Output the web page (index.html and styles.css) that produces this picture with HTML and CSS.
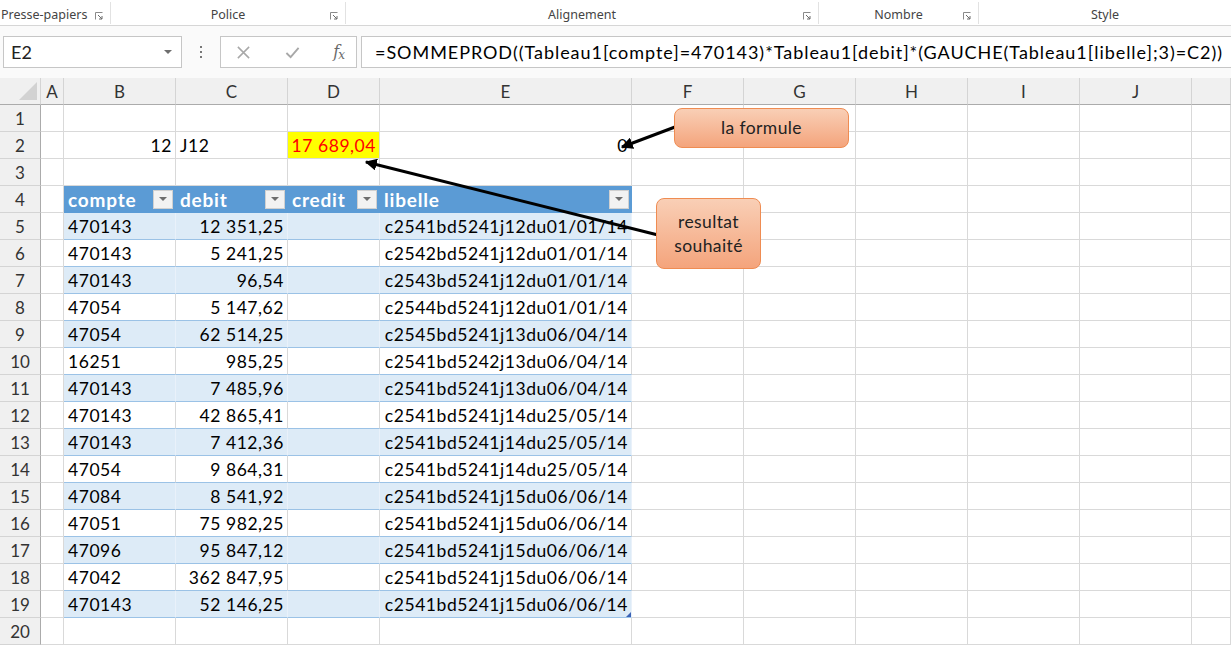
FILE: index.html
```html
<!DOCTYPE html>
<html lang="fr">
<head>
<meta charset="utf-8">
<title>Excel - SOMMEPROD</title>
<link rel="stylesheet" href="styles.css">
</head>
<body>
<div class="ribbon">
  <div class="grp grp-first"><span class="glabel">Presse-papiers</span><svg class="launch" viewBox="0 0 8 8"><path d="M0.5 0.5h7M0.5 0.5v7" stroke="#8a8a8a" fill="none"/><path d="M3 3l4 4M7 4v3h-3" stroke="#6a6a6a" fill="none"/></svg></div>
  <div class="grp"><span class="glabel">Police</span><svg class="launch" viewBox="0 0 8 8"><path d="M0.5 0.5h7M0.5 0.5v7" stroke="#8a8a8a" fill="none"/><path d="M3 3l4 4M7 4v3h-3" stroke="#6a6a6a" fill="none"/></svg></div>
  <div class="grp"><span class="glabel">Alignement</span><svg class="launch" viewBox="0 0 8 8"><path d="M0.5 0.5h7M0.5 0.5v7" stroke="#8a8a8a" fill="none"/><path d="M3 3l4 4M7 4v3h-3" stroke="#6a6a6a" fill="none"/></svg></div>
  <div class="grp"><span class="glabel">Nombre</span><svg class="launch" viewBox="0 0 8 8"><path d="M0.5 0.5h7M0.5 0.5v7" stroke="#8a8a8a" fill="none"/><path d="M3 3l4 4M7 4v3h-3" stroke="#6a6a6a" fill="none"/></svg></div>
  <div class="grp grp-last"><span class="glabel">Style</span></div>
</div>

<div class="fbar">
  <div class="namebox"><span>E2</span><svg class="nb-arrow" viewBox="0 0 8 4"><path d="M0 0h8l-4 4z" fill="#6e6e6e"/></svg></div>
  <div class="vdots"><i></i><i></i><i></i></div>
  <div class="fbtns">
    <svg class="fbtn" viewBox="0 0 16 16"><path d="M2 2l12 12M14 2L2 14" stroke="#a8a8a8" stroke-width="1.6" fill="none"/></svg>
    <svg class="fbtn" viewBox="0 0 16 16"><path d="M1.5 8.5l4.5 4.5 8.5-10" stroke="#a8a8a8" stroke-width="2" fill="none"/></svg>
    <span class="fx">f<sub>x</sub></span>
  </div>
  <div class="formula">=SOMMEPROD((Tableau1[compte]=470143)*Tableau1[debit]*(GAUCHE(Tableau1[libelle];3)=C2))</div>
</div>

<div class="sheet">
  <div class="row colhdr">
    <div class="corner"><svg class="corner-tri" viewBox="0 0 18 18"><path d="M18 0V18H0z" fill="#d2d2d2"/></svg></div>
    <div class="ch">A</div><div class="ch">B</div><div class="ch">C</div><div class="ch">D</div><div class="ch">E</div><div class="ch">F</div><div class="ch">G</div><div class="ch">H</div><div class="ch">I</div><div class="ch">J</div><div class="ch"></div>
  </div>

  <div class="row"><div class="rh">1</div><div class="c"></div><div class="c"></div><div class="c"></div><div class="c"></div><div class="c"></div><div class="c"></div><div class="c"></div><div class="c"></div><div class="c"></div><div class="c"></div><div class="c"></div></div>

  <div class="row"><div class="rh">2</div><div class="c"></div><div class="c r">12</div><div class="c">J12</div><div class="c r hl">17 689,04</div><div class="c r zero">0</div><div class="c"></div><div class="c"></div><div class="c"></div><div class="c"></div><div class="c"></div><div class="c"></div></div>

  <div class="row"><div class="rh">3</div><div class="c"></div><div class="c"></div><div class="c"></div><div class="c"></div><div class="c"></div><div class="c"></div><div class="c"></div><div class="c"></div><div class="c"></div><div class="c"></div><div class="c"></div></div>

  <div class="row"><div class="rh">4</div><div class="c"></div>
    <div class="c th">compte<span class="dd"><svg viewBox="0 0 8 4"><path d="M0 0h8l-4 4z" fill="#6d6d6d"/></svg></span></div>
    <div class="c th">debit<span class="dd"><svg viewBox="0 0 8 4"><path d="M0 0h8l-4 4z" fill="#6d6d6d"/></svg></span></div>
    <div class="c th">credit<span class="dd"><svg viewBox="0 0 8 4"><path d="M0 0h8l-4 4z" fill="#6d6d6d"/></svg></span></div>
    <div class="c th">libelle<span class="dd"><svg viewBox="0 0 8 4"><path d="M0 0h8l-4 4z" fill="#6d6d6d"/></svg></span></div>
    <div class="c"></div><div class="c"></div><div class="c"></div><div class="c"></div><div class="c"></div><div class="c"></div></div>

  <div class="row band"><div class="rh">5</div><div class="c"></div><div class="c td">470143</div><div class="c td r">12 351,25</div><div class="c td"></div><div class="c td r">c2541bd5241j12du01/01/14</div><div class="c"></div><div class="c"></div><div class="c"></div><div class="c"></div><div class="c"></div><div class="c"></div></div>
  <div class="row"><div class="rh">6</div><div class="c"></div><div class="c td">470143</div><div class="c td r">5 241,25</div><div class="c td"></div><div class="c td r">c2542bd5241j12du01/01/14</div><div class="c"></div><div class="c"></div><div class="c"></div><div class="c"></div><div class="c"></div><div class="c"></div></div>
  <div class="row band"><div class="rh">7</div><div class="c"></div><div class="c td">470143</div><div class="c td r">96,54</div><div class="c td"></div><div class="c td r">c2543bd5241j12du01/01/14</div><div class="c"></div><div class="c"></div><div class="c"></div><div class="c"></div><div class="c"></div><div class="c"></div></div>
  <div class="row"><div class="rh">8</div><div class="c"></div><div class="c td">47054</div><div class="c td r">5 147,62</div><div class="c td"></div><div class="c td r">c2544bd5241j12du01/01/14</div><div class="c"></div><div class="c"></div><div class="c"></div><div class="c"></div><div class="c"></div><div class="c"></div></div>
  <div class="row band"><div class="rh">9</div><div class="c"></div><div class="c td">47054</div><div class="c td r">62 514,25</div><div class="c td"></div><div class="c td r">c2545bd5241j13du06/04/14</div><div class="c"></div><div class="c"></div><div class="c"></div><div class="c"></div><div class="c"></div><div class="c"></div></div>
  <div class="row"><div class="rh">10</div><div class="c"></div><div class="c td">16251</div><div class="c td r">985,25</div><div class="c td"></div><div class="c td r">c2541bd5242j13du06/04/14</div><div class="c"></div><div class="c"></div><div class="c"></div><div class="c"></div><div class="c"></div><div class="c"></div></div>
  <div class="row band"><div class="rh">11</div><div class="c"></div><div class="c td">470143</div><div class="c td r">7 485,96</div><div class="c td"></div><div class="c td r">c2541bd5241j13du06/04/14</div><div class="c"></div><div class="c"></div><div class="c"></div><div class="c"></div><div class="c"></div><div class="c"></div></div>
  <div class="row"><div class="rh">12</div><div class="c"></div><div class="c td">470143</div><div class="c td r">42 865,41</div><div class="c td"></div><div class="c td r">c2541bd5241j14du25/05/14</div><div class="c"></div><div class="c"></div><div class="c"></div><div class="c"></div><div class="c"></div><div class="c"></div></div>
  <div class="row band"><div class="rh">13</div><div class="c"></div><div class="c td">470143</div><div class="c td r">7 412,36</div><div class="c td"></div><div class="c td r">c2541bd5241j14du25/05/14</div><div class="c"></div><div class="c"></div><div class="c"></div><div class="c"></div><div class="c"></div><div class="c"></div></div>
  <div class="row"><div class="rh">14</div><div class="c"></div><div class="c td">47054</div><div class="c td r">9 864,31</div><div class="c td"></div><div class="c td r">c2541bd5241j14du25/05/14</div><div class="c"></div><div class="c"></div><div class="c"></div><div class="c"></div><div class="c"></div><div class="c"></div></div>
  <div class="row band"><div class="rh">15</div><div class="c"></div><div class="c td">47084</div><div class="c td r">8 541,92</div><div class="c td"></div><div class="c td r">c2541bd5241j15du06/06/14</div><div class="c"></div><div class="c"></div><div class="c"></div><div class="c"></div><div class="c"></div><div class="c"></div></div>
  <div class="row"><div class="rh">16</div><div class="c"></div><div class="c td">47051</div><div class="c td r">75 982,25</div><div class="c td"></div><div class="c td r">c2541bd5241j15du06/06/14</div><div class="c"></div><div class="c"></div><div class="c"></div><div class="c"></div><div class="c"></div><div class="c"></div></div>
  <div class="row band"><div class="rh">17</div><div class="c"></div><div class="c td">47096</div><div class="c td r">95 847,12</div><div class="c td"></div><div class="c td r">c2541bd5241j15du06/06/14</div><div class="c"></div><div class="c"></div><div class="c"></div><div class="c"></div><div class="c"></div><div class="c"></div></div>
  <div class="row"><div class="rh">18</div><div class="c"></div><div class="c td">47042</div><div class="c td r">362 847,95</div><div class="c td"></div><div class="c td r">c2541bd5241j15du06/06/14</div><div class="c"></div><div class="c"></div><div class="c"></div><div class="c"></div><div class="c"></div><div class="c"></div></div>
  <div class="row band"><div class="rh">19</div><div class="c"></div><div class="c td">470143</div><div class="c td r">52 146,25</div><div class="c td"></div><div class="c td r last">c2541bd5241j15du06/06/14</div><div class="c"></div><div class="c"></div><div class="c"></div><div class="c"></div><div class="c"></div><div class="c"></div></div>
  <div class="row"><div class="rh">20</div><div class="c"></div><div class="c"></div><div class="c"></div><div class="c"></div><div class="c"></div><div class="c"></div><div class="c"></div><div class="c"></div><div class="c"></div><div class="c"></div><div class="c"></div></div>

  <svg class="arrows" viewBox="0 0 1231 569" width="1231" height="569">
    <defs>
      <marker id="ah" viewBox="0 0 10 10" refX="9" refY="5" markerWidth="4" markerHeight="4" orient="auto-start-reverse">
        <path d="M0 0L10 5L0 10z" fill="#000"/>
      </marker>
    </defs>
    <line x1="675" y1="49" x2="622" y2="69" stroke="#000" stroke-width="3" marker-end="url(#ah)"/>
    <line x1="658" y1="157" x2="366" y2="84" stroke="#000" stroke-width="3" marker-end="url(#ah)"/>
  </svg>
  <div class="callout co-formule">la formule</div>
  <div class="callout co-result">resultat<br>souhaité</div>
</div>
</body>
</html>
```
FILE: styles.css
```css
* { box-sizing: border-box; }
html, body { margin: 0; padding: 0; }
body {
  width: 1231px;
  height: 647px;
  overflow: hidden;
  background: #ffffff;
  font-family: Lato, "Open Sans", "Liberation Sans", sans-serif;
  color: #000;
}

/* ribbon group labels */
.ribbon {
  height: 26px;
  display: grid;
  grid-template-columns: 111px 235px 473px 160px 1fr;
  border-bottom: 1px solid #d6d6d6;
  background: #ffffff;
}
.grp {
  position: relative;
  display: flex;
  align-items: center;
  justify-content: center;
  border-right: 1px solid #e2e2e2;
  height: 22px;
  margin-top: 2px;
  padding-top: 2px;
}
.grp-first { justify-content: flex-start; }
.grp-last { border-right: none; }
.glabel {
  font-family: "Noto Sans", "Open Sans", sans-serif;
  font-size: 12.5px;
  color: #444;
}
.grp-first .glabel { margin-left: 1px; }
.launch {
  position: absolute;
  right: 7px;
  top: 10px;
  width: 8px;
  height: 8px;
}

/* formula bar */
.fbar {
  height: 52px;
  display: flex;
  align-items: center;
  padding: 0 0 0 3px;
  background: #fafafa;
}
.namebox {
  width: 179px;
  height: 32px;
  background: #fff;
  border: 1px solid #c6c6c6;
  display: flex;
  align-items: center;
  justify-content: space-between;
  padding: 0 9px 0 7px;
  font-size: 18px;
  color: #222;
}
.nb-arrow { width: 8px; height: 4px; }
.vdots {
  width: 38px;
  display: flex;
  flex-direction: column;
  align-items: center;
  gap: 3px;
}
.vdots i {
  display: block;
  width: 2px;
  height: 2px;
  background: #777;
}
.fbtns {
  width: 137px;
  height: 32px;
  background: #fff;
  border: 1px solid #c6c6c6;
  display: flex;
  align-items: center;
  justify-content: space-between;
  padding: 0 12px 0 15px;
}
.fbtn { width: 15px; height: 15px; }
.fx {
  font-family: "DejaVu Serif", "Liberation Serif", serif;
  font-style: italic;
  font-size: 16px;
  color: #6a6a6a;
  letter-spacing: -1px;
}
.fx sub { font-size: 12px; vertical-align: -2px; }
.formula {
  flex: 1;
  height: 32px;
  margin-left: 4px;
  background: #fff;
  border: 1px solid #c6c6c6;
  border-right: none;
  display: flex;
  align-items: center;
  padding-left: 13px;
  font-size: 18px;
  letter-spacing: 0.95px;
  white-space: nowrap;
  overflow: hidden;
}

/* sheet */
.sheet { position: relative; }
.row {
  display: grid;
  grid-template-columns: 41px 23px 112px 112px 92px 252px 112px 112px 112px 112px 112px 39px;
  height: 27px;
}
.c {
  border-right: 1px solid #d9d9d9;
  border-bottom: 1px solid #d9d9d9;
  display: flex;
  align-items: flex-end;
  padding: 0 3px 2px 4px;
  font-size: 17.5px;
  letter-spacing: 0.55px;
  white-space: nowrap;
  overflow: hidden;
  position: relative;
}
.r { justify-content: flex-end; }
.colhdr { height: 27px; }
.corner {
  background: #f0f0f0;
  border-right: 1px solid #d4d4d4;
  border-bottom: 1px solid #ababab;
  position: relative;
}
.corner-tri {
  position: absolute;
  right: 3px;
  bottom: 4px;
  width: 18px;
  height: 18px;
}
.ch {
  background: #f0f0f0;
  border-right: 1px solid #d4d4d4;
  border-bottom: 1px solid #ababab;
  display: flex;
  align-items: center;
  justify-content: center;
  font-size: 17px;
  color: #333;
}
.rh {
  background: #f0f0f0;
  border-right: 1px solid #ababab;
  border-bottom: 1px solid #d4d4d4;
  display: flex;
  align-items: center;
  justify-content: center;
  font-size: 17px;
  color: #333;
}

.hl {
  background: #ffff00;
  color: #ff0000;
}

/* table */
.th {
  background: #5b9bd5;
  color: #ffffff;
  font-weight: bold;
  font-size: 19px;
  letter-spacing: 0.8px;
  border-right-color: #5b9bd5;
  border-bottom-color: #5b9bd5;
  justify-content: space-between;
  align-items: center;
  padding: 0 2px 0 4px;
}
.dd {
  width: 20px;
  height: 19px;
  background: #f2f2f2;
  border: 1px solid #d0d0d0;
  display: flex;
  align-items: center;
  justify-content: center;
}
.dd svg { width: 8px; height: 4px; }
.td {
  border-bottom-color: #9bc2e6;
  border-right-color: #d9d9d9;
}
.band .td {
  background: #ddebf7;
  border-right-color: #e9f1fa;
}
.last::after {
  content: "";
  position: absolute;
  right: 0;
  bottom: 0;
  width: 0;
  height: 0;
  border-left: 5px solid transparent;
  border-bottom: 5px solid #3a62b6;
}

/* overlays */
.arrows {
  position: absolute;
  left: 0;
  top: 0;
  pointer-events: none;
}
.callout {
  position: absolute;
  display: flex;
  align-items: center;
  justify-content: center;
  text-align: center;
  background: linear-gradient(#f9cfb6, #f4a47c);
  border: 1px solid #ef8c52;
  border-radius: 8px;
  font-size: 17.5px;
  letter-spacing: 0.4px;
  color: #222;
  line-height: 24px;
}
.co-formule {
  left: 674px;
  top: 30px;
  width: 175px;
  height: 40px;
}
.co-result {
  left: 656px;
  top: 120px;
  width: 105px;
  height: 71px;
}
```
